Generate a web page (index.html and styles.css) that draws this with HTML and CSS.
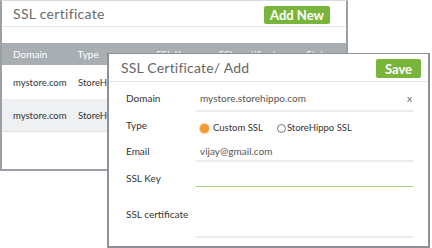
FILE: index.html
```html
<!DOCTYPE html>
<html>
<head>
<meta charset="utf-8">
<link rel="stylesheet" href="styles.css">
</head>
<body>
<div class="stage">
  <div class="panel">
    <div class="panel-head">
      <span class="panel-title">SSL certificate</span>
      <button class="btn btn-add">Add New</button>
    </div>
    <div class="spacer"></div>
    <div class="trow thead">
      <span class="c1">Domain</span><span class="c2">Type</span><span class="c3">SSL Key</span><span class="c4">SSL certificate</span><span class="c5">Status</span>
    </div>
    <div class="trow tbody">
      <span class="c1">mystore.com</span><span class="c2">StoreHippo</span>
    </div>
    <div class="trow tbody alt">
      <span class="c1">mystore.com</span><span class="c2">StoreHippo</span>
    </div>
  </div>

  <div class="modal">
    <div class="modal-head">
      <span class="modal-title">SSL Certificate/ Add</span>
      <button class="btn btn-save">Save</button>
    </div>
    <div class="frow r-domain">
      <span class="flabel">Domain</span>
      <span class="fval line">mystore.storehippo.com<span class="close">x</span></span>
    </div>
    <div class="frow r-type">
      <span class="flabel">Type</span>
      <span class="fval radios">
        <span class="radio on"></span><span class="rtext">Custom SSL</span>
        <span class="radio off"></span><span class="rtext r2">StoreHippo SSL</span>
      </span>
    </div>
    <div class="frow r-email">
      <span class="flabel">Email</span>
      <span class="fval line">vijay@gmail.com</span>
    </div>
    <div class="frow r-key">
      <span class="flabel">SSL Key</span>
      <span class="fval line green"></span>
    </div>
    <div class="frow r-cert">
      <span class="flabel">SSL certificate</span>
      <span class="fval line"></span>
    </div>
  </div>
</div>
</body>
</html>
```

FILE: styles.css
```css
* { box-sizing: border-box; margin: 0; padding: 0; }
html, body { width: 432px; height: 248px; overflow: hidden; background: #fff; }
body { font-family: "Lato", "Liberation Sans", sans-serif; color: #444; }
.stage { position: relative; width: 432px; height: 248px; }

.panel {
  width: 348px; height: 171px;
  border: 1px solid #9ba0a6; border-top-color: #d8dadd;
  border-left-width: 2px; border-right-width: 2px; border-bottom-width: 2px;
  background: #fff; overflow: hidden;
}
.panel-head {
  height: 26px; border-bottom: 1px solid #e4e6e8;
  display: flex; align-items: center; justify-content: space-between;
  padding-left: 11px; padding-right: 16px;
}
.panel-title { font-size: 14px; color: #6a6a6a; font-weight: 400; letter-spacing: 0.3px; }
.btn {
  border: none; background: #79b53c; color: #fff; font-family: inherit;
  font-weight: 700; border-radius: 2px; cursor: pointer;
}
.btn-add { width: 66px; height: 18px; font-size: 13px; margin-top: 2px; }
.spacer { height: 16px; }
.trow { display: flex; align-items: center; font-size: 9.5px; }
.thead { height: 22px; background: #a9aeb3; color: #fff; font-size: 10px; }
.tbody { height: 34px; color: #333; }
.alt { background: #eef0f2; height: 33px; border-bottom: 1px solid #dfe1e3; }
.c1 { width: 76px; padding-left: 11px; }
.c2 { width: 79px; }
.c3 { width: 63px; }
.c4 { width: 88px; }
.c5 { width: 40px; }

.modal {
  position: absolute; left: 107px; top: 53px; width: 323px; height: 195px;
  background: #fff; border: 1px solid #8c9298; border-width: 1px 2px 2px 2px;
}
.modal-head {
  height: 28px; border-bottom: 1px solid #e4e6e8;
  display: flex; align-items: center; justify-content: space-between;
  padding-left: 12px; padding-right: 7px;
}
.modal-title { font-size: 14px; color: #666; font-weight: 400; letter-spacing: 0.2px; }
.btn-save { width: 45px; height: 19px; font-size: 13px; margin-top: 2px; }

.frow { display: grid; grid-template-columns: 70px 217px; padding-left: 17px; font-size: 10px; line-height: 14px; }
.flabel { color: #333; }
.fval { color: #555; position: relative; padding-left: 4px; }
.line { border-bottom: 2px solid #ececec; }
.green { border-bottom: 1px solid #a6d27c; }
.close { position: absolute; right: 1px; top: inherit; color: #666; }

.r-domain { height: 30px; }
.r-domain .flabel, .r-domain .fval { padding-top: 9px; }
.r-type { height: 26px; }
.r-type .flabel, .r-type .fval { padding-top: 6px; }
.r-email { height: 24px; }
.r-email .flabel, .r-email .fval { padding-top: 6px; }
.r-key { height: 25px; }
.r-key .flabel { padding-top: 9px; }
.r-cert { height: 51px; }
.r-cert .flabel { padding-top: 20px; }

.radios { display: flex; align-items: center; padding-left: 4px; }
.radio { width: 9px; height: 9px; border-radius: 50%; flex: none; }
.radio.on { background: #f39a32; box-shadow: 0 0 0 1px #fbd3a3; }
.radio.off { border: 1px solid #777; margin-left: 14px; }
.rtext { margin-left: 4px; color: #333; font-size: 9.5px; }
.rtext.r2 { margin-left: 1px; }
```
